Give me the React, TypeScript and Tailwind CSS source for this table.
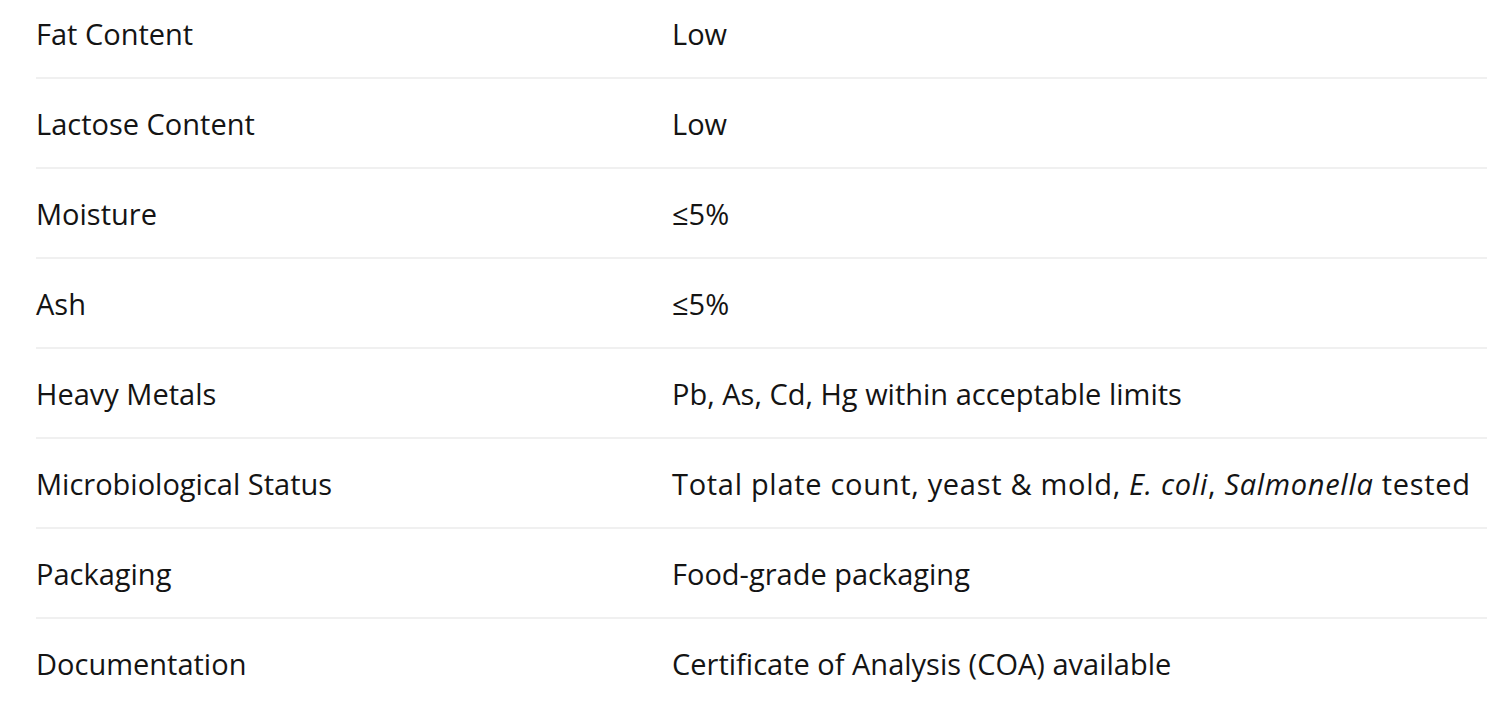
import React from "react";

const rows: { k: string; v: React.ReactNode; wide?: boolean }[] = [
  { k: "Fat Content", v: "Low" },
  { k: "Lactose Content", v: "Low" },
  { k: "Moisture", v: "≤5%" },
  { k: "Ash", v: "≤5%" },
  { k: "Heavy Metals", v: "Pb, As, Cd, Hg within acceptable limits" },
  {
    k: "Microbiological Status",
    wide: true,
    v: (
      <>
        Total plate count, yeast &amp; mold, <em>E. coli</em>, <em>Salmonella</em> tested
      </>
    ),
  },
  { k: "Packaging", v: "Food-grade packaging" },
  { k: "Documentation", v: "Certificate of Analysis (COA) available" },
];

export default function App() {
  return (
    <div
      className="w-full h-[704px] overflow-hidden bg-white text-[#141414]"
      style={{ fontFamily: '"Open Sans", "Noto Sans", sans-serif' }}
    >
      <div className="-mt-[11px] pl-[36px]">
        {rows.map((r, i) => (
          <div
            key={i}
            className="grid grid-cols-[636px_1fr] h-[90px] items-center border-b-[2px] border-[#f0f0f0] text-[29px] leading-none"
          >
            <div>{r.k}</div>
            <div className={r.wide ? "whitespace-nowrap tracking-[0.7px]" : "whitespace-nowrap"}>{r.v}</div>
          </div>
        ))}
      </div>
    </div>
  );
}
